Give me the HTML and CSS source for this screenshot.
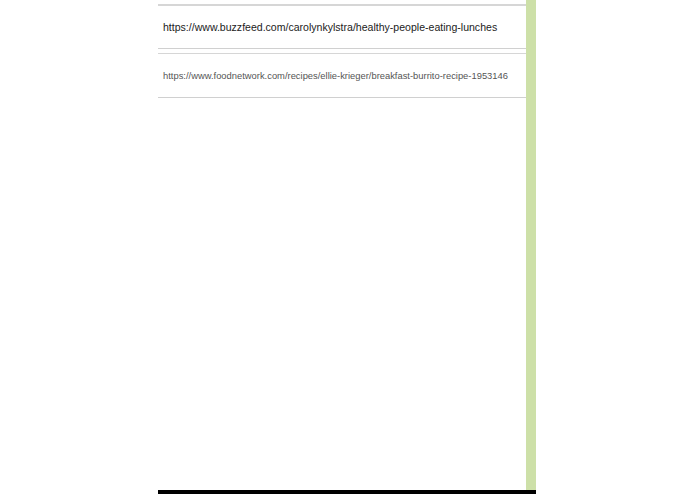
FILE: index.html
```html
<!DOCTYPE html>
<html>
<head>
<meta charset="utf-8">
<link rel="stylesheet" href="styles.css">
</head>
<body>
<div class="page">
  <div class="panel">
    <div class="list">
      <div class="item item-main">https://www.buzzfeed.com/carolynkylstra/healthy-people-eating-lunches</div>
      <div class="item item-sub">https://www.foodnetwork.com/recipes/ellie-krieger/breakfast-burrito-recipe-1953146</div>
    </div>
  </div>
  <div class="footer"></div>
</div>
</body>
</html>
```
FILE: styles.css
```css
html, body {
  margin: 0;
  padding: 0;
  background: #ffffff;
}
.page {
  width: 378px;
  height: 494px;
  margin-left: 158px;
  display: flex;
  flex-direction: column;
}
.panel {
  flex: 1;
  border-right: 10px solid #cde0a8;
  background: #fff;
}
.list {
  padding-top: 4px;
  display: flex;
  flex-direction: column;
  gap: 4px;
}
.item {
  font-family: "Liberation Sans", Arial, sans-serif;
  padding-left: 5px;
  border-top: 1px solid #d6d6d6;
  border-bottom: 1px solid #d0d0d0;
  white-space: nowrap;
  box-sizing: border-box;
}
.item-main {
  height: 45px;
  font-size: 10.55px;
  color: #222;
  padding-top: 15px;
  border-top-width: 2px;
}
.item-sub {
  height: 45px;
  font-size: 9.38px;
  color: #555;
  padding-top: 17px;
}
.footer {
  height: 4px;
  background: #000;
}
```
